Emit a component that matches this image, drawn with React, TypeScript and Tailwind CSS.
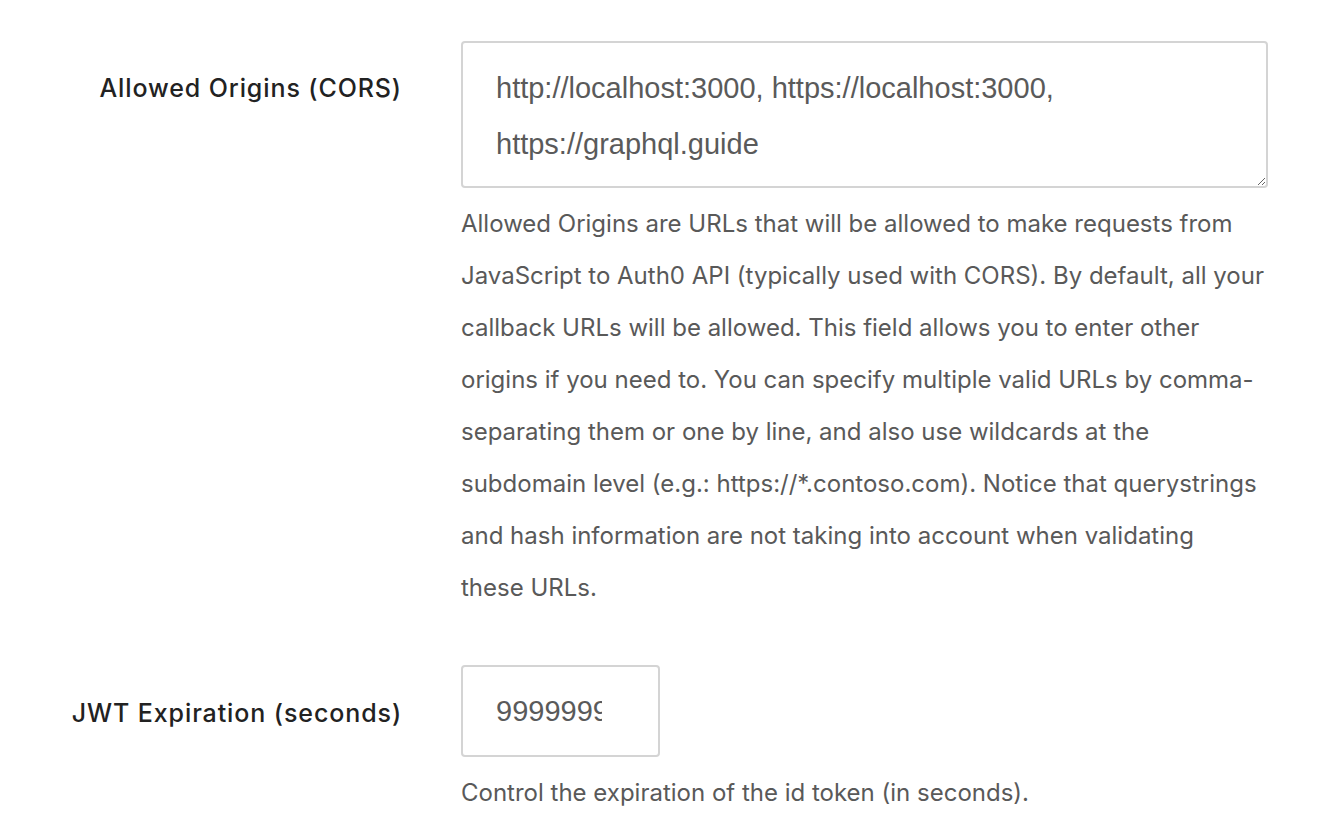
const font = { fontFamily: 'Inter, "Noto Sans", sans-serif' }
const fieldFont = { fontFamily: '"Liberation Sans", Arial, sans-serif' }

const corsHelp = [
  'Allowed Origins are URLs that will be allowed to make requests from',
  'JavaScript to Auth0 API (typically used with CORS). By default, all your',
  'callback URLs will be allowed. This field allows you to enter other',
  'origins if you need to. You can specify multiple valid URLs by comma-',
  'separating them or one by line, and also use wildcards at the',
  'subdomain level (e.g.: https://*.contoso.com). Notice that querystrings',
  'and hash information are not taking into account when validating',
  'these URLs.',
]

type RowProps = {
  label: string
  labelPad: string
  children: React.ReactNode
  help: string[]
}

function Row({ label, labelPad, children, help }: RowProps) {
  return (
    <div className="flex items-start">
      <label className={`w-[402px] shrink-0 text-right text-[25px] font-medium tracking-[0.9px] text-[#222] leading-[32px] ${labelPad}`}>
        {label}
      </label>
      <div className="ml-[59px] w-[806px] flex flex-col items-start">
        {children}
        <p className="mt-[10px] text-[24px] leading-[52px] text-[#595959]">
          {help.map((line) => (
            <span key={line} className="block whitespace-nowrap">
              {line}
            </span>
          ))}
        </p>
      </div>
    </div>
  )
}

export default function App() {
  return (
    <main style={font} className="min-h-screen bg-white pt-[41px] flex flex-col gap-[51px]">
      <Row label="Allowed Origins (CORS)" labelPad="pt-[31px]" help={corsHelp}>
        <textarea
          readOnly
          style={fieldFont}
          value={'http://localhost:3000, https://localhost:3000,\nhttps://graphql.guide'}
          className="w-[807px] h-[147px] rounded-[4px] border-2 border-[#d4d4d4] px-[33px] pt-[17px] text-[29px] leading-[56px] text-[#5a5a5a] resize-y outline-none"
        />
      </Row>
      <Row label="JWT Expiration (seconds)" labelPad="pt-[32px]" help={['Control the expiration of the id token (in seconds).']}>
        <input
          readOnly
          style={fieldFont}
          value="9999999"
          className="w-[199px] h-[92px] rounded-[4px] border-2 border-[#d4d4d4] pl-[33px] pr-[56px] text-[29px] text-[#5a5a5a] outline-none"
        />
      </Row>
    </main>
  )
}
